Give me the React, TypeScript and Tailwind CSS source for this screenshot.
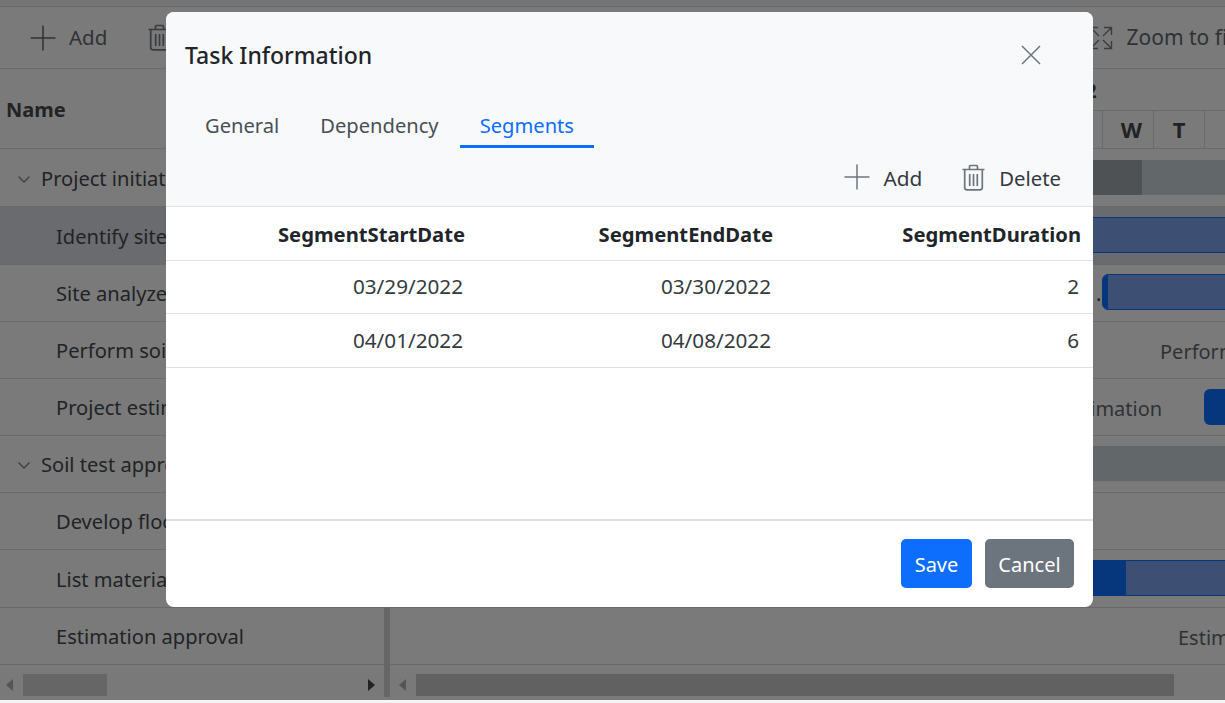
const Plus = () => (
  <svg width="26" height="26" viewBox="0 0 26 26" fill="none" stroke="currentColor" strokeWidth="1.5"><path d="M13 0.5V25.5M0.5 13H25.5" /></svg>
);
const Trash = () => (
  <svg width="23" height="27" viewBox="0 0 23 27" fill="none" stroke="currentColor" strokeWidth="1.7"><path d="M0.5 5.5H22.5M7.5 5V2.5Q7.5 1.5 8.5 1.5H14.5Q15.5 1.5 15.5 2.5V5M2.7 6V23.5Q2.7 25.8 5 25.8H18Q20.3 25.8 20.3 23.5V6M7.7 10V22M11.5 10V22M15.3 10V22" /></svg>
);
const Chevron = () => (
  <svg width="14" height="9" viewBox="0 0 14 9" fill="none" stroke="currentColor" strokeWidth="1.3" className="text-[#3c3f42]"><path d="M1.5 1.5L7 7L12.5 1.5" /></svg>
);
const ZoomFit = () => (
  <svg width="24" height="24" viewBox="0 0 24 24" fill="none" stroke="#3a3d40" strokeWidth="1.4"><path d="M15 1.5H22.5V9M22.5 1.5L14 10M22.5 15V22.5H15M22.5 22.5L14 14M9 1.5H1.5V9M1.5 1.5L10 10M1.5 15V22.5H9M1.5 22.5L10 14" /></svg>
);
const rows: [string, number, boolean][] = [
  ["Project initiation", 58, false],
  ["Identify site location", 58, true],
  ["Site analyze", 57, false],
  ["Perform soil test", 57, false],
  ["Project estimation", 57, false],
  ["Soil test approval", 57, false],
  ["Develop floor plan", 57, false],
  ["List materials", 58, false],
  ["Estimation approval", 57, false],
];
const font = { fontFamily: '"Noto Sans", "Open Sans", sans-serif' };
function GanttRow({ i, h, selected }: { i: number; h: number; selected: boolean }) {
  return (
    <div className={`relative overflow-hidden border-b border-[#6a6a6a] ${selected ? "bg-[#696b6e]" : ""}`} style={{ height: h }}>
      {i === 0 && <div className="absolute left-[690px] right-0 top-[11px] h-[35px] flex"><div className="w-[62px] ml-auto bg-[#4f5255]" /><div className="w-[83px] bg-[#62676a]" /></div>}
      {i === 1 && <div className="absolute left-[690px] right-0 top-[10px] h-[36px] bg-[#3d5074] border-y border-[#06367c]" />}
      {i === 2 && <><span className="absolute left-[706px] top-[15px] text-[20px] leading-[28px] text-[#222]">.</span><div className="absolute left-[712px] right-[-8px] top-[9px] h-[36px] bg-[#3d5074] border border-[#06367c] rounded-l-md overflow-hidden"><div className="w-[5px] h-full bg-[#06367c]" /></div></>}
      {i === 3 && <span className="absolute left-[770px] top-[15px] text-[20px] text-[#2f3235] whitespace-nowrap">Perform</span>}
      {i === 4 && <><span className="absolute left-[693px] top-[15px] text-[20px] text-[#2f3235] whitespace-nowrap">timation</span><div className="absolute left-[814px] right-[-8px] top-[10px] h-[36px] bg-[#06367c] rounded-l-md" /></>}
      {i === 5 && <div className="absolute left-[690px] right-0 top-[10px] h-[35px] bg-[#62676a]" />}
      {i === 7 && <div className="absolute left-[690px] right-0 top-[10px] h-[36px] bg-[#3d5074] border-y border-[#06367c] flex"><div className="ml-[10px] w-[36px] bg-[#06367c]" /></div>}
      {i === 8 && <span className="absolute left-[788px] top-[15px] text-[20px] text-[#2f3235] whitespace-nowrap">Estimation</span>}
    </div>
  );
}
export default function App() {
  return (
    <div className="relative h-[703px] w-[1225px] overflow-hidden bg-[#7a7a7a] text-[20px] text-[#212325]" style={font}>
      <div className="h-[7px] bg-[#757575] border-b border-[#6a6a6a]" />
      <div className="flex h-[62px] items-center border-b border-[#6a6a6a] text-[#2f3235]">
        <div className="ml-[30px] flex items-center gap-[13px]"><Plus /><span className="text-[20.5px]">Add</span></div>
        <div className="ml-[41px] text-[#3a3d40]"><Trash /></div>
        <div className="ml-auto flex items-center gap-[14px] whitespace-nowrap mr-[-10px]"><ZoomFit /><span className="text-[21px]">Zoom to fit</span></div>
      </div>
      <div className="flex h-[603px]">
        <div className="w-[384px] shrink-0">
          <div className="flex h-[80px] items-center border-b border-[#6a6a6a] pl-[6px] pt-[2px] font-bold">Name</div>
          {rows.map(([name, h, sel], i) => {
            const summary = i === 0 || i === 5;
            return (
              <div key={name} className={`flex items-center border-b border-[#6a6a6a] whitespace-nowrap pt-[3px] ${sel ? "bg-[#696b6e]" : ""} ${summary ? "pl-[17px] gap-[10px]" : "pl-[56px]"}`} style={{ height: h }}>
                {summary && <Chevron />}
                <span className="text-[20.1px]">{name}</span>
              </div>
            );
          })}
        </div>
        <div className="w-[6px] shrink-0 bg-[#666666]" />
        <div className="flex-1 min-w-0">
          <div className="h-[80px] border-b border-[#6a6a6a] flex flex-col">
            <div className="h-[41px] pl-[661px] pt-[7px] font-bold whitespace-nowrap">2022</div>
            <div className="flex-1 flex pl-[712px] border-t border-[#6a6a6a] font-bold text-[22px]">
              {["W", "T", "F"].map((d, i) => (
                <div key={d} className={`w-[51px] shrink-0 border-l border-[#6a6a6a] flex items-center justify-center ${i === 0 ? "pl-[7px]" : ""}`}>{d}</div>
              ))}
            </div>
          </div>
          {rows.map(([name, h, sel], i) => <GanttRow key={name} i={i} h={h} selected={sel} />)}
        </div>
      </div>
      <div className="absolute left-0 right-0 top-[672px] h-[25px] flex bg-[#797979]">
        <div className="w-[384px] flex items-center relative">
          <span className="ml-[6px] w-0 h-0 border-y-[6px] border-y-transparent border-r-[7px] border-r-[#555555]" />
          <div className="ml-[10px] w-[84px] h-[22px] bg-[#666666]" />
          <span className="absolute right-[9px] w-0 h-0 border-y-[6px] border-y-transparent border-l-[7px] border-l-[#222222]" />
        </div>
        <div className="w-[6px] bg-[#666666]" />
        <div className="flex-1 flex items-center">
          <span className="ml-[9px] w-0 h-0 border-y-[6px] border-y-transparent border-r-[7px] border-r-[#555555]" />
          <div className="ml-[10px] w-[758px] h-[22px] bg-[#616161]" />
        </div>
      </div>
      <div className="absolute left-0 right-0 bottom-0 h-[3px] bg-[#f4f4f4]" />

      <div className="absolute left-[166px] top-[12px] flex h-[595px] w-[927px] flex-col overflow-hidden rounded-[8px] bg-white">
        <div className="h-[195px] shrink-0 bg-[#f8f9fa] border-b border-[#dee2e6] flex flex-col">
          <div className="flex h-[86px] items-center justify-between pl-[19px] pr-[52px]">
            <span className="text-[23px] font-medium text-[#212529]">Task Information</span>
            <svg width="20" height="20" viewBox="0 0 20 20" fill="none" stroke="#6c757d" strokeWidth="1.5"><path d="M1 1L19 19M19 1L1 19" /></svg>
          </div>
          <div className="flex h-[50px] gap-px pl-[19px]">
            {["General", "Dependency", "Segments"].map((t, i) => (
              <div key={t} className={`flex items-center justify-center px-[20px] pt-[8px] text-[20.15px] ${i === 2 ? "text-[#0d6efd] border-b-[3px] border-[#0d6efd]" : "text-[#495057] border-b-[3px] border-transparent"}`}>{t}</div>
            ))}
          </div>
          <div className="flex flex-1 items-center justify-end pr-[32px] text-[#343a40]">
            <div className="flex items-center gap-[13px] text-[#6c757d]"><Plus /><span className="text-[20.8px] text-[#343a40] pt-[3px]">Add</span></div>
            <div className="ml-[40px] flex items-center gap-[14px] text-[#6c757d]"><Trash /><span className="text-[20.3px] text-[#343a40] pt-[3px]">Delete</span></div>
          </div>
        </div>
        <div className="h-[314px] shrink-0 border-b-2 border-[#dee2e6]">
          <div className="grid h-[54px] grid-cols-[310px_308px_308px] items-center border-b border-[#dee2e6] pt-[2px] font-bold text-[#212529]">
            {["SegmentStartDate", "SegmentEndDate", "SegmentDuration"].map((t) => <div key={t} className="pr-[11px] text-right whitespace-nowrap text-[20.2px]">{t}</div>)}
          </div>
          {[["03/29/2022", "03/30/2022", "2", "h-[53px]"], ["04/01/2022", "04/08/2022", "6", "h-[54px]"]].map((r) => (
            <div key={r[0]} className={`grid ${r[3]} grid-cols-[310px_308px_308px] items-center border-b border-[#dee2e6] text-[#343a40]`}>
              {r.slice(0, 3).map((c, j) => <div key={j} className="pr-[13px] text-right text-[20.7px]">{c}</div>)}
            </div>
          ))}
        </div>
        <div className="flex flex-1 items-start justify-end gap-[13px] pr-[19px] pt-[18px]">
          <button className="h-[49px] w-[71px] rounded-[5px] bg-[#0d6efd] pt-[2px] text-white">Save</button>
          <button className="h-[49px] w-[89px] rounded-[5px] bg-[#6c757d] pt-[2px] text-white">Cancel</button>
        </div>
      </div>
    </div>
  );
}
